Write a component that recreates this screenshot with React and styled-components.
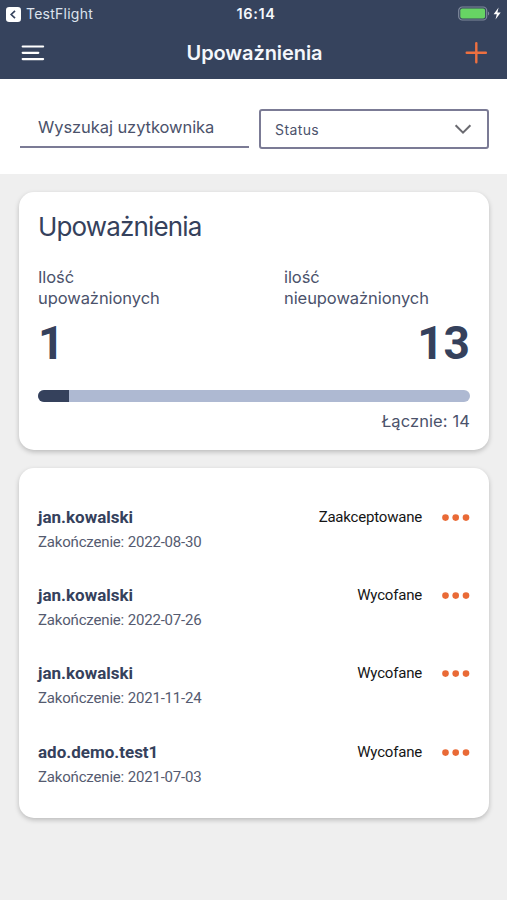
import React, {useState} from "react";
import styled, {createGlobalStyle} from "styled-components";

const GlobalStyle = createGlobalStyle`
  * {
    box-sizing: border-box;
  }
  body {
    margin: 0;
    background-color: #EFEFEF;
    font-family: Inter, sans-serif;
    color: #35415C;
  }
`;

const Screen = styled.div`
  width: 100%;
  max-width: 507px;
  min-height: 900px;
  background-color: #EFEFEF;
`;

const TopPanel = styled.header`
  height: 79px;
  background-color: #36435D;
  color: #F4F7FC;
`;

const StatusBar = styled.div`
  height: 28px;
  padding: 0 5px 0 6px;
  display: grid;
  grid-template-columns: 1fr auto 1fr;
  align-items: center;
`;

const BackToApp = styled.div`
  display: flex;
  align-items: center;
  gap: 5px;
  font-size: 14px;
  line-height: 28px;
  letter-spacing: 0.25px;
  color: #DDE3EE;
`;

const Clock = styled.div`
  padding-left: 4px;
  font-size: 14.5px;
  line-height: 28px;
  font-weight: 600;
  letter-spacing: 0.6px;
`;

const Battery = styled.div`
  display: flex;
  justify-content: flex-end;
`;

const NavBar = styled.div`
  height: 51px;
  padding: 0 19px 2px 21px;
  display: grid;
  grid-template-columns: 24px 1fr 24px;
  align-items: center;
`;

const IconButton = styled.button`
  padding: 0;
  border: none;
  background: none;
  display: flex;
  cursor: pointer;
`;

const NavTitle = styled.h1`
  margin: 0;
  text-align: center;
  font-size: 20px;
  line-height: 48px;
  font-weight: 600;
  letter-spacing: -0.08px;
`;

const Filters = styled.div`
  height: 95px;
  padding: 30px 18px 0 20px;
  display: flex;
  gap: 10px;
  background-color: #FFFFFF;
`;

const SearchInput = styled.input`
  width: 229px;
  height: 39px;
  padding: 0 18px 1px;
  border: none;
  border-bottom: 2px solid #7B7B95;
  border-radius: 0;
  outline: none;
  background: none;
  font-family: Inter, sans-serif;
  font-size: 16.5px;
  letter-spacing: -0.07px;
  color: #4B526B;
  &::placeholder {
    color: #4B526B;
    opacity: 1;
  }
`;

const Select = styled.button`
  width: 230px;
  height: 40px;
  padding: 0 15px 0 14px;
  border: 2px solid #7B7B95;
  border-radius: 3px;
  background-color: #FFFFFF;
  display: flex;
  align-items: center;
  justify-content: space-between;
  font-family: Inter, sans-serif;
  font-size: 14px;
  letter-spacing: 0.4px;
  color: #4B526B;
`;

const Cards = styled.main`
  padding: 18px 18px 0 19px;
  display: flex;
  flex-direction: column;
  gap: 18px;
`;

const Card = styled.section`
  height: ${({$height}) => $height}px;
  padding: ${({$padding}) => $padding};
  border-radius: 15px;
  background-color: #FFFFFF;
  box-shadow: 0 2px 5px rgba(0, 0, 0, 0.22);
`;

const CardTitle = styled.h2`
  margin: 0;
  font-size: 26px;
  line-height: 34px;
  font-weight: 400;
  letter-spacing: -0.85px;
`;

const Counters = styled.div`
  margin-top: 23px;
  display: flex;
  justify-content: space-between;
`;

const Counter = styled.div`
  width: ${({$width}) => $width};
`;

const CounterLabel = styled.div`
  font-size: 16.5px;
  line-height: 21px;
  letter-spacing: -0.07px;
  color: #4B526B;
`;

const CounterValue = styled.div`
  margin-top: 9px;
  font-family: Roboto, sans-serif;
  font-size: 46px;
  line-height: 50px;
  font-weight: 700;
  text-align: ${({$align}) => $align};
`;

const Progress = styled.div`
  height: 12px;
  margin-top: 22px;
  border-radius: 6px;
  overflow: hidden;
  background-color: #AEB9D2;
`;

const ProgressFill = styled.div`
  height: 100%;
  background-color: #35415C;
`;

const Total = styled.div`
  margin-top: 8px;
  text-align: right;
  font-size: 16.5px;
  line-height: 22px;
  letter-spacing: 0.1px;
  color: #4B526B;
`;

const UserRow = styled.div`
  height: 78.2px;
  display: flex;
  align-items: flex-start;
  font-family: Roboto, sans-serif;
`;

const UserInfo = styled.div`
  flex-grow: 1;
`;

const UserName = styled.div`
  font-size: 17px;
  line-height: 24px;
  font-weight: 700;
`;

const EndDate = styled.div`
  font-size: 15px;
  line-height: 26px;
  letter-spacing: -0.18px;
  color: #555B70;
`;

const UserStatus = styled.div`
  margin-right: 20px;
  font-size: 15px;
  line-height: 24px;
  letter-spacing: -0.2px;
  color: #151515;
`;

const MoreButton = styled(IconButton)`
  height: 24px;
  align-items: center;
`;

const users = [
    {name: "jan.kowalski", date: "2022-08-30", status: "Zaakceptowane"},
    {name: "jan.kowalski", date: "2022-07-26", status: "Wycofane"},
    {name: "jan.kowalski", date: "2021-11-24", status: "Wycofane"},
    {name: "ado.demo.test1", date: "2021-07-03", status: "Wycofane"},
]

const BackIcon = () => (
    <svg width="15" height="15" viewBox="0 0 15 15">
        <rect width="15" height="15" rx="3.2" fill="#FFFFFF"/>
        <path d="M9 3.8 5.2 7.5 9 11.2" fill="none" stroke="#36435D" strokeWidth="1.7"/>
    </svg>
)

const BatteryIcon = () => (
    <svg width="44" height="16" viewBox="0 0 44 16">
        <rect x="0.7" y="1" width="28" height="13" rx="3.6" fill="none" stroke="#7F899C" strokeWidth="1.2"/>
        <rect x="2.3" y="2.6" width="24.8" height="9.8" rx="2" fill="#67D464"/>
        <path d="M30 5.5c1.6.5 1.6 3.5 0 4z" fill="#7F899C"/>
        <path d="M40.6 1.6 35.6 8.3h3.2l-1.3 5.2 5.2-7.1h-3.3z" fill="#FFFFFF"/>
    </svg>
)

const MenuIcon = () => (
    <svg width="24" height="18" viewBox="0 0 24 18" stroke="#FFFFFF" strokeWidth="2.2" strokeLinecap="round">
        <path d="M1.7 2.5h20.4M1.7 8.8h15.6M1.7 15.1h20.4"/>
    </svg>
)

const PlusIcon = () => (
    <svg width="24" height="24" viewBox="0 0 24 24" stroke="#EE7040" strokeWidth="2.4" strokeLinecap="round">
        <path d="M12.3 2.1v19.2M2.7 11.7h19.2"/>
    </svg>
)

const ChevronIcon = () => (
    <svg width="18" height="12" viewBox="0 0 18 12">
        <path d="M1.6 2.2 9 9.6 16.4 2.2" fill="none" stroke="#6A6A70" strokeWidth="2"/>
    </svg>
)

const DotsIcon = () => (
    <svg width="28" height="8" viewBox="0 0 28 8" fill="#E96A36">
        <circle cx="3.5" cy="4.6" r="3.3"/>
        <circle cx="13.7" cy="4.6" r="3.3"/>
        <circle cx="24" cy="4.6" r="3.3"/>
    </svg>
)

const App = () => {
    const [search, setSearch] = useState("")

    const handleSearch = (event) => {
        setSearch(event.target.value)
    }

    return (
        <Screen>
            <GlobalStyle/>
            <TopPanel>
                <StatusBar>
                    <BackToApp><BackIcon/>TestFlight</BackToApp>
                    <Clock>16:14</Clock>
                    <Battery><BatteryIcon/></Battery>
                </StatusBar>
                <NavBar>
                    <IconButton><MenuIcon/></IconButton>
                    <NavTitle>Upoważnienia</NavTitle>
                    <IconButton><PlusIcon/></IconButton>
                </NavBar>
            </TopPanel>
            <Filters>
                <SearchInput placeholder="Wyszukaj uzytkownika" value={search} onChange={handleSearch}/>
                <Select>Status<ChevronIcon/></Select>
            </Filters>
            <Cards>
                <Card $height={258} $padding="18px 19px 0">
                    <CardTitle>Upoważnienia</CardTitle>
                    <Counters>
                        <Counter $width="140px">
                            <CounterLabel>Ilość<br/>upoważnionych</CounterLabel>
                            <CounterValue $align="left">1</CounterValue>
                        </Counter>
                        <Counter $width="186px">
                            <CounterLabel>ilość<br/>nieupoważnionych</CounterLabel>
                            <CounterValue $align="right">13</CounterValue>
                        </Counter>
                    </Counters>
                    <Progress>
                        <ProgressFill style={{width: `${100 / 14}%`}}/>
                    </Progress>
                    <Total>Łącznie: 14</Total>
                </Card>
                <Card $height={350} $padding="37px 19px 0">
                    {users.map((user) => (
                        <UserRow key={user.date}>
                            <UserInfo>
                                <UserName>{user.name}</UserName>
                                <EndDate>Zakończenie: {user.date}</EndDate>
                            </UserInfo>
                            <UserStatus>{user.status}</UserStatus>
                            <MoreButton><DotsIcon/></MoreButton>
                        </UserRow>
                    ))}
                </Card>
            </Cards>
        </Screen>
    )
}

export default App
